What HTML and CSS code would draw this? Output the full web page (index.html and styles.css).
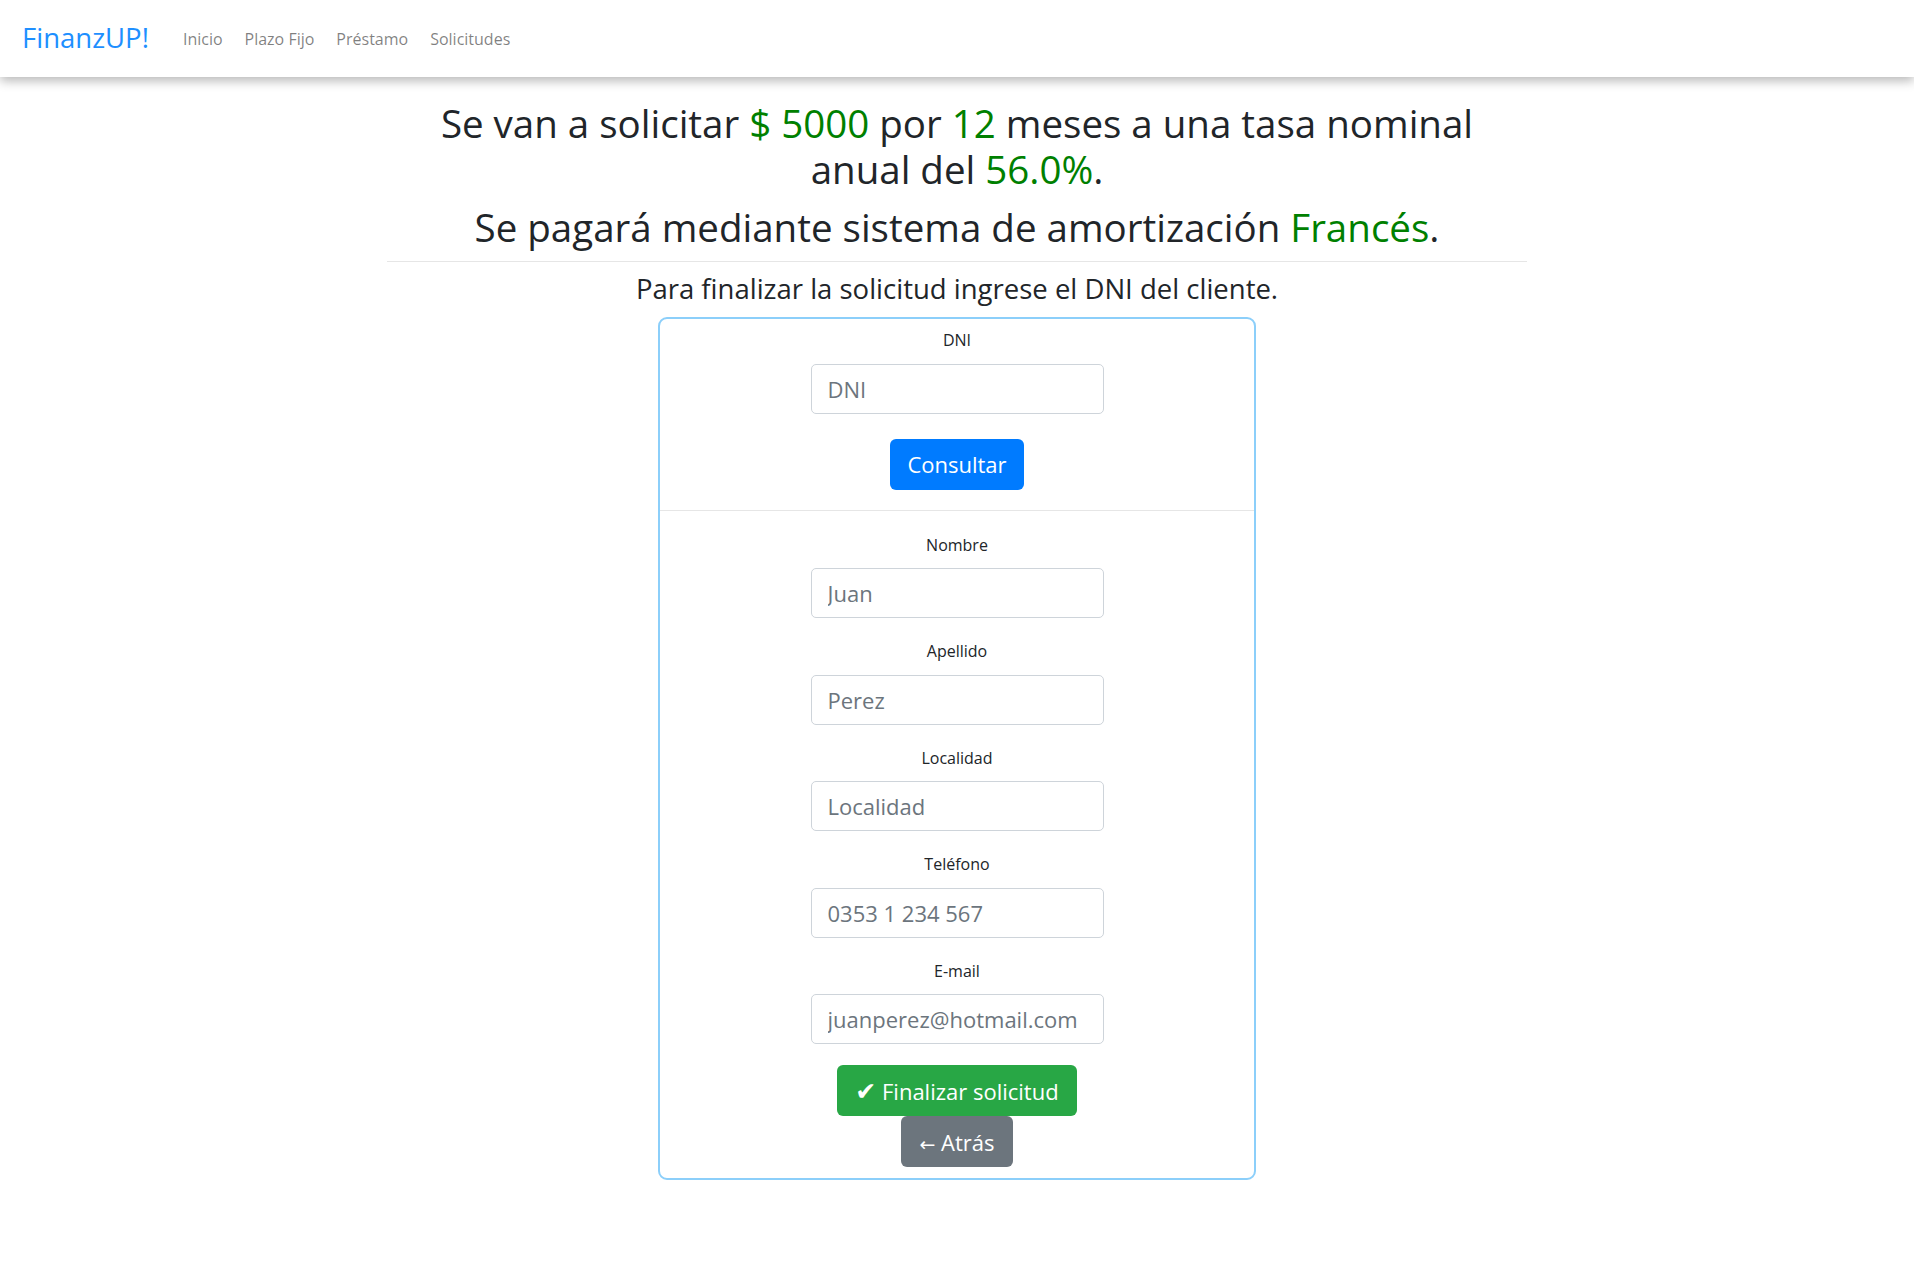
FILE: index.html
```
<!DOCTYPE html>
<html lang="es">
<head>
<meta charset="utf-8">
<title>FinanzUP! - Solicitud de préstamo</title>
<link rel="stylesheet" href="styles.css">
</head>
<body>

<!-- barra de navegacion -->
<nav class="navbar">
	<a class="brand" href="#">FinanzUP!</a>
	<a class="navlink" href="#">Inicio</a>
	<a class="navlink" href="#">Plazo Fijo</a>
	<a class="navlink" href="#">Préstamo</a>
	<a class="navlink" href="#">Solicitudes</a>
</nav>

<div class="container">
	<h1 class="resumen">Se van a solicitar <span class="dato">$ 5000</span> por <span class="dato">12</span> meses a una tasa nominal anual del <span class="dato">56.0%</span>.</h1>
	<h1 class="resumen sistema">Se pagará mediante sistema de amortización <span class="dato">Francés</span>.</h1>
	<hr class="sep">
	<h4 class="aviso">Para finalizar la solicitud ingrese el DNI del cliente.</h4>

	<div class="tarjeta">
		<form class="consulta">
			<label class="etiqueta" for="dni">DNI</label>
			<input class="campo" id="dni" type="text" placeholder="DNI">
			<button class="btn btnAzul" type="button">Consultar</button>
		</form>

		<form class="datos">
			<div class="grupo">
				<label class="etiqueta" for="nombre">Nombre</label>
				<input class="campo" id="nombre" type="text" placeholder="Juan">
			</div>
			<div class="grupo">
				<label class="etiqueta" for="apellido">Apellido</label>
				<input class="campo" id="apellido" type="text" placeholder="Perez">
			</div>
			<div class="grupo">
				<label class="etiqueta" for="localidad">Localidad</label>
				<input class="campo" id="localidad" type="text" placeholder="Localidad">
			</div>
			<div class="grupo">
				<label class="etiqueta" for="telefono">Teléfono</label>
				<input class="campo" id="telefono" type="text" placeholder="0353 1 234 567">
			</div>
			<div class="grupo">
				<label class="etiqueta" for="email">E-mail</label>
				<input class="campo" id="email" type="text" placeholder="juanperez@hotmail.com">
			</div>

			<button class="btn btnVerde" type="button"><span class="check">&#10004;</span> Finalizar solicitud</button>
			<button class="btn btnGris" type="button"><span class="flecha">&larr;</span> Atrás</button>
		</form>
	</div>
</div>

</body>
</html>
```

FILE: styles.css
```
body	{ margin:0;
	  font-family:"Open Sans", "Noto Sans", sans-serif;
	  color:#212529;
	  background:#fff;
}

a	{ text-decoration:none; }

/* barra superior */
.navbar	{ display:flex;
	  align-items:center;
	  height:77px;
	  padding:0 22px;
	  background:#fff;
	  box-shadow:0 4px 10px rgba(0,0,0,.28);
}

.brand	{ font-size:27.5px;
	  color:#1e8fff;
	  margin-right:23px;
	  padding-bottom:2px;
}

.navlink	{ font-size:16px;
		  color:rgba(0,0,0,.5);
		  padding:0 11px;
}

/* contenido */
.container	{ width:1140px;
		  margin:0 auto;
		  text-align:center;
}

.resumen	{ font-size:38.5px;
		  font-weight:400;
		  line-height:46px;
		  margin:23px 0 0 0;
}

.resumen.sistema	{ margin-top:12px; }

.dato	{ color:#008000; }

.sep	{ border:0;
	  border-top:1px solid #e6e6e6;
	  margin:11px 0 0 0;
}

.aviso	{ font-size:27.5px;
	  font-weight:400;
	  line-height:33px;
	  margin:10px 0 12px 0;
}

/* tarjeta del formulario */
.tarjeta	{ width:594px;
		  margin:0 auto;
		  border:2px solid #8ccffa;
		  border-radius:9px;
}

.consulta	{ display:flex;
		  flex-direction:column;
		  align-items:center;
		  padding:9px 0 20px 0;
		  border-bottom:1px solid #e6e6e6;
}

.datos	{ display:flex;
	  flex-direction:column;
	  align-items:center;
	  padding:22px 0 11px 0;
}

.grupo	{ display:flex;
	  flex-direction:column;
	  align-items:center;
	  margin-bottom:21px;
}

.etiqueta	{ font-size:16px;
		  line-height:24px;
		  margin-bottom:11.5px;
}

.campo	{ box-sizing:border-box;
	  width:293px;
	  height:50px;
	  padding:0 16px;
	  font-family:"Open Sans", "Noto Sans", sans-serif;
	  font-size:22px;
	  color:#495057;
	  border:1px solid #ced4da;
	  border-radius:5px;
	  outline:none;
}

.campo::placeholder	{ color:#6c757d; }

.btn	{ box-sizing:border-box;
	  height:51px;
	  padding:0 18px;
	  font-family:"Open Sans", "Noto Sans", sans-serif;
	  font-size:22px;
	  color:#fff;
	  white-space:nowrap;
	  border:0;
	  border-radius:6px;
}

.consulta .campo	{ margin-bottom:25px; }

.btnAzul	{ background:#007bff; padding:0 17px; }

.btnVerde	{ background:#28a745; }

.btnGris	{ background:#6c757d; }

.check	{ font-family:"DejaVu Sans", sans-serif; font-size:25px; line-height:20px; }

.flecha	{ font-family:"DejaVu Sans", sans-serif; font-size:19px; line-height:20px; }
```
